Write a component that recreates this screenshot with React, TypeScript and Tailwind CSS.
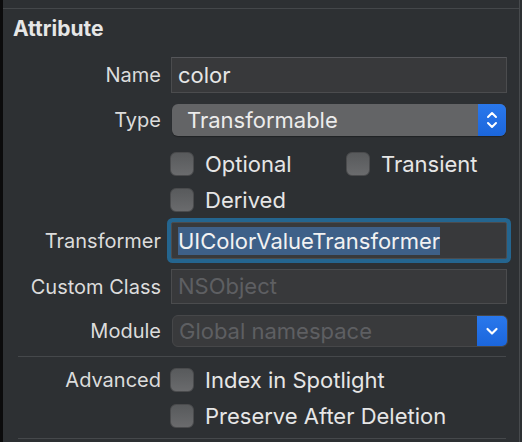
import React from 'react';

const font = { fontFamily: 'Inter, "Noto Sans", sans-serif' };

function Checkbox({ label }: { label: string }) {
  return (
    <div className="flex items-center h-[24px]">
      <div className="w-[24px] h-[24px] rounded-[6px] bg-gradient-to-b from-[#585a5c] to-[#6a6b6d] border border-[#4a4b4d]" />
      <span className="ml-[11px] text-[22px] leading-none text-[#e6e6e6]">{label}</span>
    </div>
  );
}

function Label({ children }: { children: React.ReactNode }) {
  return (
    <div className="w-[161px] shrink-0 text-right text-[20px] leading-none text-[#dcdcdc]">
      {children}
    </div>
  );
}

export default function App() {
  return (
    <div
      className="relative w-[522px] h-[442px] overflow-hidden bg-[#2d3033] border-l-[3px] border-[#0b0b0c]"
      style={font}
    >
      {/* top + right edges */}
      <div className="h-[8px]" />
      <div className="h-[1px] bg-[#44474a] mr-[3px]" />
      <div className="absolute top-0 right-[2px] w-[1px] h-full bg-[#474a4d]" />

      <div className="h-[48px] pl-[10px] pt-[9px] text-[21px] font-bold leading-none text-[#e6e6e6]">
        Attribute
      </div>

      {/* Name */}
      <div className="flex items-center -ml-[3px]">
        <Label>Name</Label>
        <div className="ml-[10px] w-[336px] h-[36px] bg-[#38393b] border border-[#4b4c4e] border-t-[#55565a] flex items-center pl-[6px] text-[22px] text-[#e6e6e6]">
          color
        </div>
      </div>

      {/* Type */}
      <div className="flex items-center mt-[11px] -ml-[3px]">
        <Label>Type</Label>
        <div className="ml-[11px] w-[334px] h-[32px] rounded-[6px] bg-[#636466] flex items-center overflow-hidden shadow-[0_1px_1px_rgba(0,0,0,0.3)]">
          <span className="flex-1 pl-[15px] text-[22px] text-[#ececec]">Transformable</span>
          <div className="w-[28px] h-full bg-gradient-to-b from-[#2a78ec] to-[#1b66dc] flex items-center justify-center">
            <svg width="12" height="20" viewBox="0 0 12 20" fill="none" stroke="white" strokeWidth="2" strokeLinecap="round" strokeLinejoin="round">
              <path d="M2 7 L6 3 L10 7" />
              <path d="M2 13 L6 17 L10 13" />
            </svg>
          </div>
        </div>
      </div>

      {/* Optional / Transient / Derived */}
      <div className="ml-[167px] mt-[16px] flex flex-col gap-[12px]">
        <div className="flex">
          <div className="w-[176px]">
            <Checkbox label="Optional" />
          </div>
          <Checkbox label="Transient" />
        </div>
        <Checkbox label="Derived" />
      </div>

      {/* Transformer */}
      <div className="flex items-center mt-[10px] -ml-[3px]">
        <Label>Transformer</Label>
        <div className="ml-[10px] w-[336px] h-[37px] bg-[#38393b] border border-[#4b4c4e] ring-[4px] ring-[#24658f] rounded-[2px] flex items-center pl-[6px]">
          <span className="bg-[#3e6088] text-[22px] leading-[28px] text-[#f2f2f2]">UIColorValueTransformer</span>
        </div>
      </div>

      {/* Custom Class */}
      <div className="flex items-center mt-[10px] -ml-[3px]">
        <Label>Custom Class</Label>
        <div className="ml-[10px] w-[336px] h-[35px] bg-[#38393b] border border-[#4b4c4e] flex items-center pl-[6px] text-[22px] text-[#5e5f62]">
          NSObject
        </div>
      </div>

      {/* Module */}
      <div className="flex items-center mt-[11px] -ml-[3px]">
        <Label>Module</Label>
        <div className="ml-[11px] w-[336px] h-[32px] rounded-[6px] bg-[#393a3c] border border-[#464749] flex items-center overflow-hidden">
          <span className="flex-1 pl-[6px] text-[22px] text-[#5e5f62]">Global namespace</span>
          <div className="w-[30px] h-full bg-gradient-to-b from-[#2a78ec] to-[#1b66dc] flex items-center justify-center">
            <svg width="14" height="10" viewBox="0 0 14 10" fill="none" stroke="white" strokeWidth="2.2" strokeLinecap="round" strokeLinejoin="round">
              <path d="M2.5 3 L7 7.5 L11.5 3" />
            </svg>
          </div>
        </div>
      </div>

      <div className="ml-[15px] w-[488px] h-[1px] bg-[#45484b] mt-[9px]" />

      {/* Advanced */}
      <div className="flex items-start mt-[11px] -ml-[3px]">
        <div className="h-[24px] flex items-center">
          <Label>Advanced</Label>
        </div>
        <div className="ml-[9px] flex flex-col gap-[12px]">
          <Checkbox label="Index in Spotlight" />
          <Checkbox label="Preserve After Deletion" />
        </div>
      </div>

      <div className="ml-[15px] w-[488px] h-[1px] bg-[#45484b] mt-[10px]" />
    </div>
  );
}
